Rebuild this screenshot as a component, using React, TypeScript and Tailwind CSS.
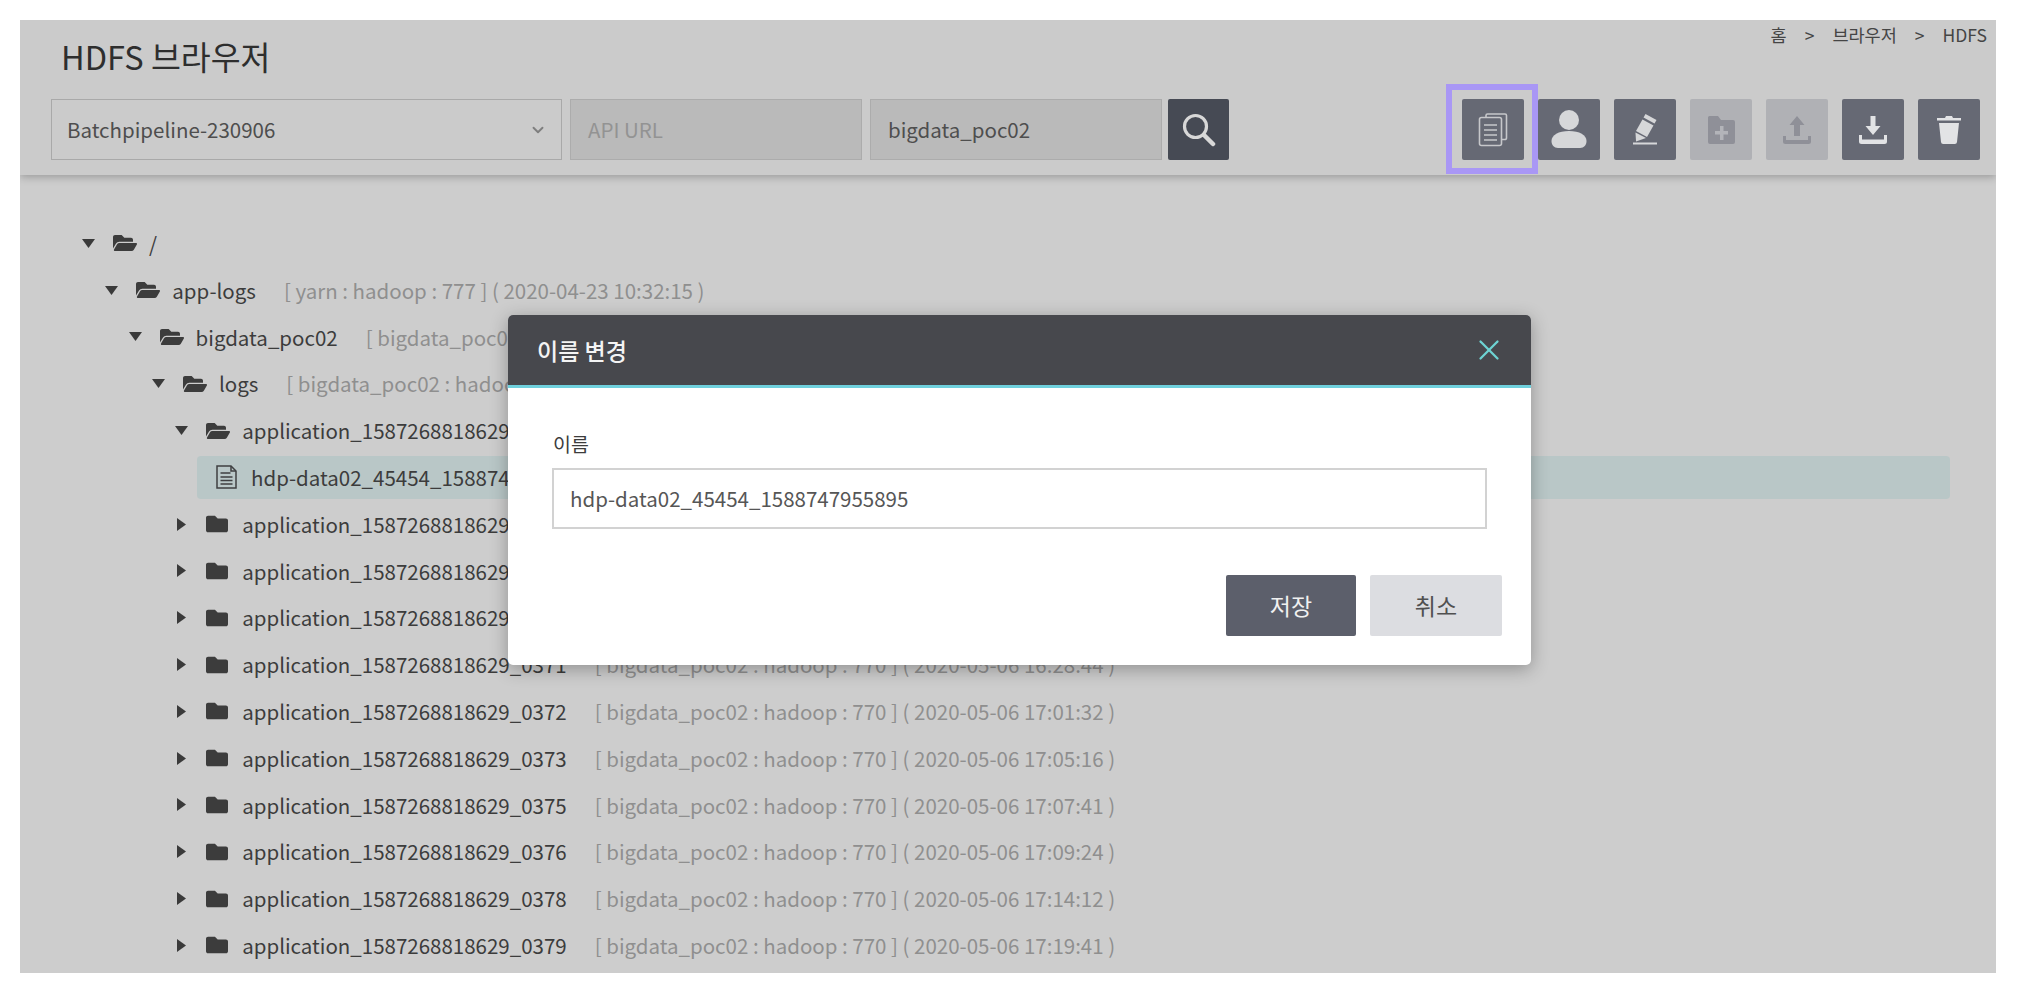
import { ChevronDown, X } from 'lucide-react';
import { FaFolder, FaFolderOpen } from 'react-icons/fa';

const APP = 'application_1587268818629';
const META = '[ bigdata_poc02 : hadoop : 770 ]';

type Row = { level: number; name: string; meta?: string; open?: boolean; file?: boolean };

const rows: Row[] = [
  { level: 0, name: '/', open: true },
  { level: 1, name: 'app-logs', meta: '[ yarn : hadoop : 777 ] ( 2020-04-23 10:32:15 )', open: true },
  { level: 2, name: 'bigdata_poc02', meta: `${META} ( 2020-04-23 10:32:15 )`, open: true },
  { level: 3, name: 'logs', meta: `${META} ( 2020-04-23 10:32:15 )`, open: true },
  { level: 4, name: `${APP}_0367`, meta: `${META} ( 2020-05-06 15:39:15 )`, open: true },
  { level: 5, name: 'hdp-data02_45454_1588747955895', file: true },
  { level: 4, name: `${APP}_0368`, meta: `${META} ( 2020-05-06 15:42:20 )` },
  { level: 4, name: `${APP}_0369`, meta: `${META} ( 2020-05-06 16:01:12 )` },
  { level: 4, name: `${APP}_0370`, meta: `${META} ( 2020-05-06 16:14:51 )` },
  { level: 4, name: `${APP}_0371`, meta: `${META} ( 2020-05-06 16:28:44 )` },
  { level: 4, name: `${APP}_0372`, meta: `${META} ( 2020-05-06 17:01:32 )` },
  { level: 4, name: `${APP}_0373`, meta: `${META} ( 2020-05-06 17:05:16 )` },
  { level: 4, name: `${APP}_0375`, meta: `${META} ( 2020-05-06 17:07:41 )` },
  { level: 4, name: `${APP}_0376`, meta: `${META} ( 2020-05-06 17:09:24 )` },
  { level: 4, name: `${APP}_0378`, meta: `${META} ( 2020-05-06 17:14:12 )` },
  { level: 4, name: `${APP}_0379`, meta: `${META} ( 2020-05-06 17:19:41 )` },
];

function SearchIcon() {
  return (
    <svg width="34" height="34" viewBox="0 0 34 34" fill="none" stroke="#d8d8d8">
      <circle cx="13.500" cy="13.500" r="11" strokeWidth="3.200" />
      <path d="M22 22l9 9" strokeWidth="4.500" strokeLinecap="round" />
    </svg>
  );
}

function CopyIcon() {
  return (
    <svg width="30" height="34" viewBox="0 0 30 34" fill="none" stroke="#c6c7ca" strokeWidth="1.600">
      <path d="M8 4V2.500A1.500 1.500 0 0 1 9.500 1H27a1.500 1.500 0 0 1 1.500 1.500V25a1.500 1.500 0 0 1-1.500 1.500H24" />
      <rect x="1.500" y="4.500" width="22" height="28" rx="2" />
      <path d="M6 12h13M6 17h13M6 22h13M6 27h13" />
    </svg>
  );
}

function UserIcon() {
  return (
    <svg width="36" height="39" viewBox="0 0 36 39" fill="#d6d7d9">
      <circle cx="18" cy="10" r="10" />
      <path d="M.500 31c0-6 7-10 17.500-10s17.500 4 17.500 10c0 4-2.500 7-6.500 7H7c-4 0-6.500-3-6.500-7z" />
    </svg>
  );
}

function PenIcon() {
  return (
    <svg width="24" height="31" viewBox="0 0 24 31" fill="#d6d7d9">
      <path d="M12.500 0l11 6-2 3.500-11-6z" />
      <path d="M9.500 5.500l11 6-6.500 11.500-11-6z" />
      <path d="M2.500 18.500L13 24l-10 3.500z" />
      <rect x="0" y="28.500" width="24" height="2" />
    </svg>
  );
}

function FolderPlusIcon() {
  return (
    <svg width="27" height="28" viewBox="0 0 27 28" fill="#8f9098">
      <path d="M1.500 0H10l3 4h12a2 2 0 0 1 2 2v20a2 2 0 0 1-2 2H2a2 2 0 0 1-2-2V1.500A1.500 1.500 0 0 1 1.500 0z" />
      <path d="M12 10h3.500v5H20v3.500h-4.500V24H12v-5.500H7V15h5z" fill="#b3b4b9" />
    </svg>
  );
}

function UploadIcon() {
  return (
    <svg width="28" height="28" viewBox="0 0 28 28" fill="#8f9098">
      <path d="M14 0l7.500 9H17v11h-6V9H6.500z" />
      <path d="M0 20h3v4h22v-4h3v5.500a2.500 2.500 0 0 1-2.500 2.500h-23A2.500 2.500 0 0 1 0 25.500z" />
    </svg>
  );
}

function DownloadIcon() {
  return (
    <svg width="28" height="28" viewBox="0 0 28 28" fill="#e2e3e5">
      <path d="M11.500 0h5v10H21.500L14 19 6.500 10h5z" />
      <path d="M0 19h3v4.500h22V19h3v6.500a2.500 2.500 0 0 1-2.500 2.500h-23A2.500 2.500 0 0 1 0 25.500z" />
    </svg>
  );
}

function TrashIcon() {
  return (
    <svg width="24" height="28" viewBox="0 0 24 28" fill="#e2e3e5">
      <path d="M9 0h6l1 2h8v2.500H0V2h8z" />
      <path d="M2 7h20l-2 19a2.200 2.200 0 0 1-2.200 2H6.200A2.200 2.200 0 0 1 4 26z" />
    </svg>
  );
}

function FileIcon() {
  return (
    <svg width="21" height="24" viewBox="0 0 21 24" fill="none" stroke="#3f4042" strokeWidth="1.500">
      <path d="M1 1h14l5 5v17H1z" />
      <path d="M15 1v5h5M4.500 8h10M4.500 12h12M4.500 15.500h12M4.500 19h12" />
    </svg>
  );
}

function ToolButton({ children, disabled }: { children: React.ReactNode; disabled?: boolean }) {
  return (
    <button
      className={
        disabled
          ? 'w-[62px] h-[61px] rounded-[2px] flex items-center justify-center bg-[#b0b1b5]'
          : 'w-[62px] h-[61px] rounded-[2px] flex items-center justify-center bg-[#666974]'
      }
    >
      {children}
    </button>
  );
}

function TreeRow({ row }: { row: Row }) {
  if (row.file) {
    return (
      <div className="h-[46.8px] flex items-center" style={{ paddingLeft: 177 }}>
        <div className="h-[43px] flex-1 mr-[46px] pl-[19px] rounded-[4px] bg-[#b9c7c7] flex items-center gap-[14px]">
          <FileIcon />
          <span className="text-[20.5px] text-[#3c3c3c]">{row.name}</span>
        </div>
      </div>
    );
  }
  return (
    <div className="h-[46.8px] flex items-center whitespace-nowrap" style={{ paddingLeft: 62 + row.level * 23.3 }}>
      <span className="w-[31px] shrink-0 flex items-center">
        {row.open ? (
          <svg width="13" height="9" viewBox="0 0 13 9" fill="#3a3a3a">
            <path d="M0 0h13L6.500 9z" />
          </svg>
        ) : (
          <svg width="9" height="13" viewBox="0 0 9 13" fill="#3a3a3a" className="ml-[2px]">
            <path d="M0 0l9 6.500L0 13z" />
          </svg>
        )}
      </span>
      <span className="w-[36px] shrink-0 flex items-center text-[#3c3c3c]">
        {row.open ? <FaFolderOpen className="w-[24px] h-[22px]" /> : <FaFolder className="w-[22px] h-[22px]" />}
      </span>
      <span className="text-[20.5px] text-[#3c3c3c]">{row.name}</span>
      {row.meta && <span className="ml-[28px] text-[20.5px] text-[#8f8f8f]">{row.meta}</span>}
    </div>
  );
}

export default function App() {
  return (
    <div
      className="relative h-[998px] bg-white pt-[20px] pl-[20px] pr-[22px] pb-[25px] overflow-hidden"
      style={{ fontFamily: '"Noto Sans CJK KR", "Noto Sans", sans-serif' }}
    >
      <div className="h-[953px] bg-[#cdcdcd] flex flex-col overflow-hidden">
        {/* header */}
        <header className="h-[155px] shrink-0 bg-[#cbcbcb] pl-[31px] pr-[16px] shadow-[0_2px_8px_rgba(0,0,0,0.25)] relative z-10">
          <div className="h-[79px] flex justify-between">
            <h1 className="text-[32.5px] font-normal leading-[71px] pl-[10px] text-[#2e2e2e]">HDFS 브라우저</h1>
            <nav className="h-[30px] flex items-center gap-[18px] text-[17.5px] text-[#454545] -mr-[7px]">
              <span>홈</span>
              <span>&gt;</span>
              <span>브라우저</span>
              <span>&gt;</span>
              <span>HDFS</span>
            </nav>
          </div>
          <div className="flex justify-between">
            <div className="flex gap-[8px]">
              <div className="w-[511px] h-[61px] border border-[#a9a9a9] pl-[15px] pr-[14px] flex items-center justify-between text-[20.5px] text-[#4e4e4e]">
                Batchpipeline-230906
                <ChevronDown className="w-[18px] h-[18px] text-[#7e7e7e]" strokeWidth={2.500} />
              </div>
              <div className="w-[292px] h-[61px] border border-[#acacac] bg-[#bababa] px-[17px] flex items-center text-[20.5px] text-[#939393]">
                API URL
              </div>
              <div className="w-[292px] h-[61px] border border-[#acacac] bg-[#bababa] px-[17px] flex items-center text-[20.5px] text-[#4e4e4e]">
                bigdata_poc02
              </div>
              <button className="w-[61px] h-[61px] -ml-[2px] rounded-[2px] bg-[#464a54] flex items-center justify-center">
                <SearchIcon />
              </button>
            </div>
            <div className="flex gap-[14px]">
              <ToolButton>
                <CopyIcon />
              </ToolButton>
              <ToolButton>
                <UserIcon />
              </ToolButton>
              <ToolButton>
                <PenIcon />
              </ToolButton>
              <ToolButton disabled>
                <FolderPlusIcon />
              </ToolButton>
              <ToolButton disabled>
                <UploadIcon />
              </ToolButton>
              <ToolButton>
                <DownloadIcon />
              </ToolButton>
              <ToolButton>
                <TrashIcon />
              </ToolButton>
            </div>
          </div>
        </header>

        {/* tree */}
        <main className="flex-1 pt-[45px]">
          {rows.map((row) => (
            <TreeRow key={row.name} row={row} />
          ))}
        </main>
      </div>

      {/* highlight over the first tool button */}
      <div className="absolute left-[1446px] top-[84px] w-[92px] h-[90px] border-[6px] border-[#a997f5] z-20" />

      {/* rename dialog */}
      <div className="absolute left-[508px] top-[315px] w-[1023px] h-[350px] bg-white rounded-[5px] overflow-hidden shadow-[0_4px_18px_rgba(0,0,0,0.3)] z-20">
        <div className="h-[73px] bg-[#47484d] border-b-[3px] border-[#6fd0dc] pl-[29px] pr-[25px] flex items-center justify-between">
          <h2 className="text-[23px] font-medium text-[#f4f4f4]">이름 변경</h2>
          <X className="w-[34px] h-[34px] text-[#6ed3d3]" strokeWidth={1.600} />
        </div>
        <div className="pt-[43px] pl-[44px] pr-[44px]">
          <label className="block text-[19.5px] leading-[25px] pl-[1px] text-[#3c3c3c] mb-[12px]">이름</label>
          <div className="w-[935px] h-[61px] border-2 border-[#d2d2d2] pl-[16px] flex items-center text-[20.5px] text-[#565656]">
            hdp-data02_45454_1588747955895
          </div>
          <div className="mt-[46px] -mr-[15px] flex justify-end gap-[14px]">
            <button className="w-[130px] h-[61px] rounded-[2px] bg-[#5c5f6b] text-[23px] text-[#f0f0f0]">저장</button>
            <button className="w-[132px] h-[61px] rounded-[2px] bg-[#dcdde1] text-[23px] text-[#505050]">취소</button>
          </div>
        </div>
      </div>
    </div>
  );
}
